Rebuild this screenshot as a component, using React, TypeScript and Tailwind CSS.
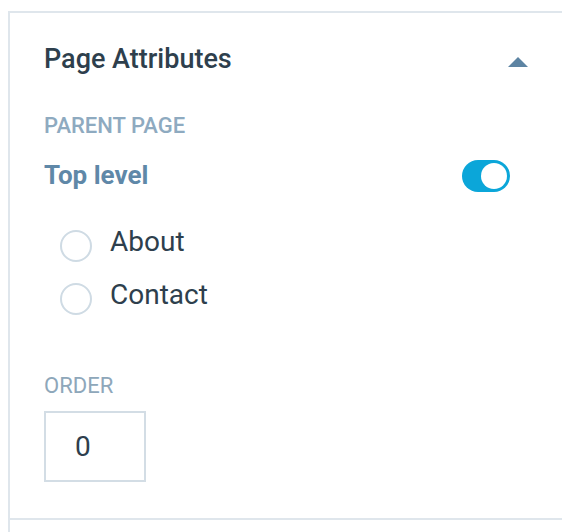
import React from 'react';

const options = ['About', 'Contact'];

function Toggle() {
  return (
    <div className="flex h-[32px] w-[48px] items-center justify-end rounded-full bg-[#0ba6d9] p-[3px]">
      <div className="h-[26px] w-[26px] rounded-full bg-white" />
    </div>
  );
}

export default function App() {
  return (
    <div className="h-[532px] w-[562px] bg-white font-['Roboto',sans-serif]">
      <div className="ml-2 h-full border-l-2 border-[#dfe6ec]">
        <div className="mt-[11px] border-y-2 border-[#dfe6ec] px-[34px] pt-[30px] pb-[36px]">
          <div className="flex items-start justify-between">
            <h2 className="text-[27px] leading-[32px] font-medium text-[#2e3f4d]">Page Attributes</h2>
            <svg width="20" height="10" viewBox="0 0 20 10" className="mt-[14px]">
              <polygon points="10,0 20,10 0,10" fill="#5d84a3" />
            </svg>
          </div>

          <div className="mt-[38px] text-[22px] leading-[26px] font-medium uppercase text-[#8eaac0]">
            Parent Page
          </div>
          <div className="mt-[19px] flex items-center justify-between pr-[18px]">
            <span className="text-[26px] leading-[32px] font-bold text-[#5f88a8]">Top level</span>
            <div className="mt-[2px]">
              <Toggle />
            </div>
          </div>

          <div className="mt-[33px] flex flex-col gap-[16px] pl-[16px]">
            {options.map((label) => (
              <label key={label} className="flex items-start gap-[18px]">
                <span className="mt-[5px] h-[32px] w-[32px] rounded-full border-2 border-[#cfdbe4]" />
                <span className="text-[28px] leading-[34px] text-[#2e3f4d]">{label}</span>
              </label>
            ))}
          </div>

          <div className="mt-[58px] text-[22px] leading-[26px] uppercase text-[#8ea7ba]">Order</div>
          <div className="mt-[12px] flex h-[71px] w-[102px] items-center border-2 border-[#d3dde5] pl-[29px] text-[28px] text-[#2e3f4d]">
            0
          </div>
        </div>
      </div>
    </div>
  );
}
